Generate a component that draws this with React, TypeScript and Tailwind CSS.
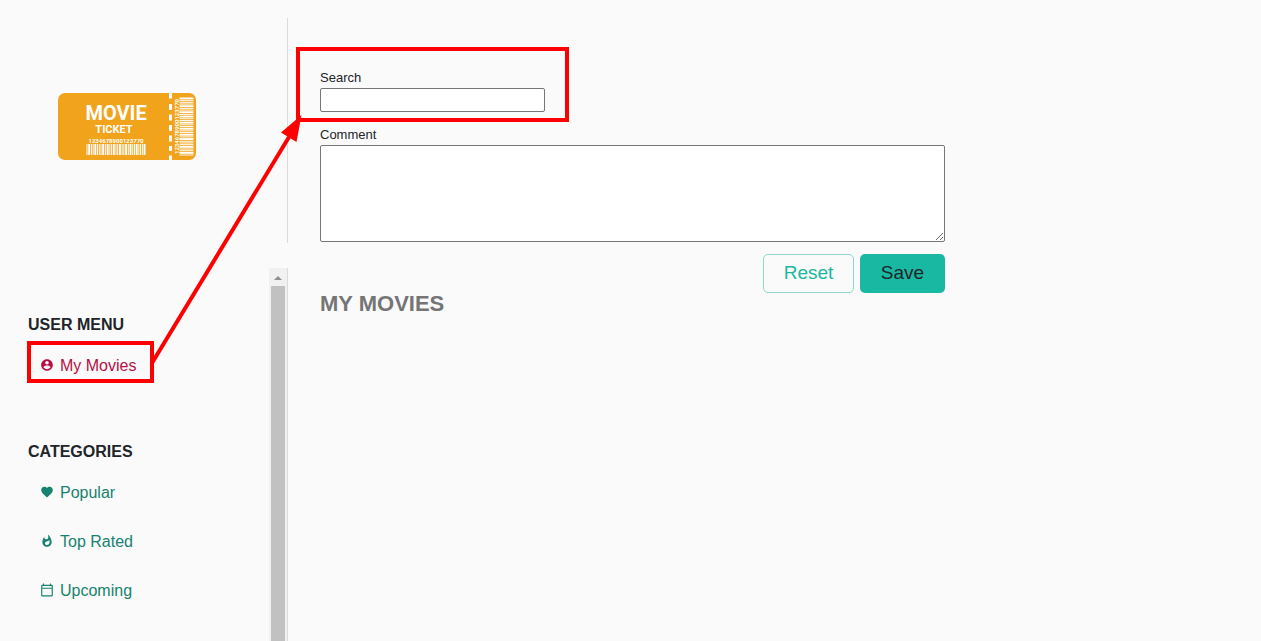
import type { ComponentType } from "react";
import { MdFavorite, MdOutlineCalendarToday, MdWhatshot } from "react-icons/md";

type IconType = ComponentType<{ className?: string }>;

function AccountIcon({ className }: { className?: string }) {
  return (
    <svg viewBox="0 0 24 24" fill="currentColor" className={className} aria-hidden="true">
      <path d="M12 2C6.480 2 2 6.480 2 12s4.480 10 10 10 10-4.480 10-10S17.520 2 12 2zm0 3c1.660 0 3 1.340 3 3s-1.340 3-3 3-3-1.340-3-3 1.340-3 3-3zm0 14.200c-2.500 0-4.710-1.280-6-3.220.030-1.990 4-3.080 6-3.080 1.990 0 5.970 1.090 6 3.080-1.290 1.940-3.500 3.220-6 3.220z" />
    </svg>
  );
}

const categories: { label: string; icon: IconType }[] = [
  { label: "Popular", icon: MdFavorite },
  { label: "Top Rated", icon: MdWhatshot },
  { label: "Upcoming", icon: MdOutlineCalendarToday },
];

const bars = [1, 2, 1, 1, 2, 1, 1, 1, 2, 1, 2, 1, 1, 2, 1, 1, 2, 1, 1, 2, 1, 2, 1, 1, 2, 1, 1, 1, 2];

function Barcode({ length, height }: { length: number; height: number }) {
  const total = bars.reduce((sum, b) => sum + b + 0.8, 0) - 0.8;
  let x = 0;
  return (
    <g fill="#fff">
      {bars.map((b, i) => {
        const at = x;
        x += b + 0.8;
        return (
          <rect key={i} x={(at / total) * length} y="0" width={(b / total) * length} height={height} />
        );
      })}
    </g>
  );
}

function Ticket() {
  return (
    <svg
      viewBox="0 0 138 67"
      className="h-[67px] w-[138px] font-[Roboto,sans-serif]"
      role="img"
      aria-label="Movie ticket"
    >
      <rect width="138" height="67" rx="7" fill="#f1a31c" />
      <path
        d="M112.500 0v5.500M112.500 11v6M112.500 21.500v6M112.500 32v6M112.500 42.500v6M112.500 53v5M112.500 62.500v4.500"
        stroke="#fff"
        strokeWidth="3"
      />
      <g fill="#fff" textAnchor="middle">
        <text x="58" y="27" fontSize="20" fontWeight="700">MOVIE</text>
        <text x="56" y="40" fontSize="11" fontWeight="700">TICKET</text>
        <text x="58" y="50" fontSize="6" fontWeight="700">1234678900123770</text>
        <text transform="translate(120.500 33.500) rotate(-90)" fontSize="6" fontWeight="700">
          1234678900123770
        </text>
      </g>
      <g transform="translate(28.500 51)">
        <Barcode length={59} height={11} />
      </g>
      <g transform="translate(121.500 62.500) rotate(-90)">
        <Barcode length={58} height={14} />
      </g>
    </svg>
  );
}

function MenuLink({ label, icon: Icon, active }: { label: string; icon: IconType; active?: boolean }) {
  return (
    <li>
      <a
        href="#"
        className={`flex h-6 items-center gap-1.5 pl-3 text-base ${active ? "text-[#b80f44]" : "text-[#16826f]"}`}
      >
        <Icon className="mb-0.5 size-[14px] shrink-0" />
        {label}
      </a>
    </li>
  );
}

function Sidebar() {
  return (
    <aside className="flex w-72 shrink-0 flex-col gap-[25px] pt-[18px]">
      <div className="flex h-[225px] shrink-0 items-center border-r border-[#dbdbdb] pb-2 pl-[58px]">
        <Ticket />
      </div>
      <div className="flex min-h-0 flex-1 border-r border-[#dbdbdb]">
        <nav className="flex-1 overflow-hidden pt-[45px] pl-7">
          <h2 className="text-base leading-6 font-bold">USER MENU</h2>
          <ul className="mt-[17px]">
            <MenuLink label="My Movies" icon={AccountIcon} active />
          </ul>
          <h2 className="mt-[62px] text-base leading-6 font-bold">CATEGORIES</h2>
          <ul className="mt-[17px] flex flex-col gap-[25px]">
            {categories.map((c) => (
              <MenuLink key={c.label} label={c.label} icon={c.icon} />
            ))}
          </ul>
        </nav>
        <div className="flex w-[18px] flex-col bg-[#f1f1f1] px-0.5" aria-hidden="true">
          <div className="flex h-[18px] shrink-0 items-center justify-center">
            <svg viewBox="0 0 8 4" className="mt-0.5 h-1 w-2">
              <path d="M4 0l4 4H0z" fill="#909090" />
            </svg>
          </div>
          <div className="flex-1 bg-[#c1c1c1]" />
        </div>
      </div>
    </aside>
  );
}

function Callouts() {
  return (
    <svg
      width="600"
      height="400"
      className="pointer-events-none absolute top-0 left-0"
      aria-hidden="true"
    >
      <g fill="none" stroke="#f00" strokeWidth="4">
        <rect x="298" y="49" width="269" height="71" />
        <rect x="29" y="343" width="123" height="38" />
        <path d="M152 363L289 137" />
      </g>
      <path d="M301.500 115L281 132.500L296.500 142z" fill="#f00" />
    </svg>
  );
}

export default function App() {
  return (
    <div className="relative flex h-screen bg-[#fafafa] font-['Liberation_Sans',Arial,sans-serif] text-[#212529]">
      <Sidebar />
      <main className="flex-1 pt-[68px] pr-8 pl-8">
        <form className="flex max-w-[625px] flex-col">
          <label htmlFor="search" className="text-[13px] leading-5">
            Search
          </label>
          <input
            id="search"
            type="text"
            className="h-6 w-[225px] rounded-xs border border-[#767676] bg-white px-1 text-[13px]"
          />
          <label htmlFor="comment" className="mt-[13px] text-[13px] leading-5">
            Comment
          </label>
          <textarea
            id="comment"
            className="h-[97px] resize rounded-xs border border-[#767676] bg-white p-1 text-[13px]"
          />
          <div className="mt-3 flex justify-end gap-1.5">
            <button
              type="reset"
              className="h-[39px] w-[91px] rounded-[5px] border border-[#8cd9cb] text-[19px] text-[#1ab7a2]"
            >
              Reset
            </button>
            <button type="button" className="h-[39px] w-[85px] rounded-[5px] bg-[#19b8a2] text-[19px]">
              Save
            </button>
          </div>
        </form>
        <h1 className="text-[22px] leading-[22px] font-bold text-[#757575]">MY MOVIES</h1>
      </main>
      <Callouts />
    </div>
  );
}
